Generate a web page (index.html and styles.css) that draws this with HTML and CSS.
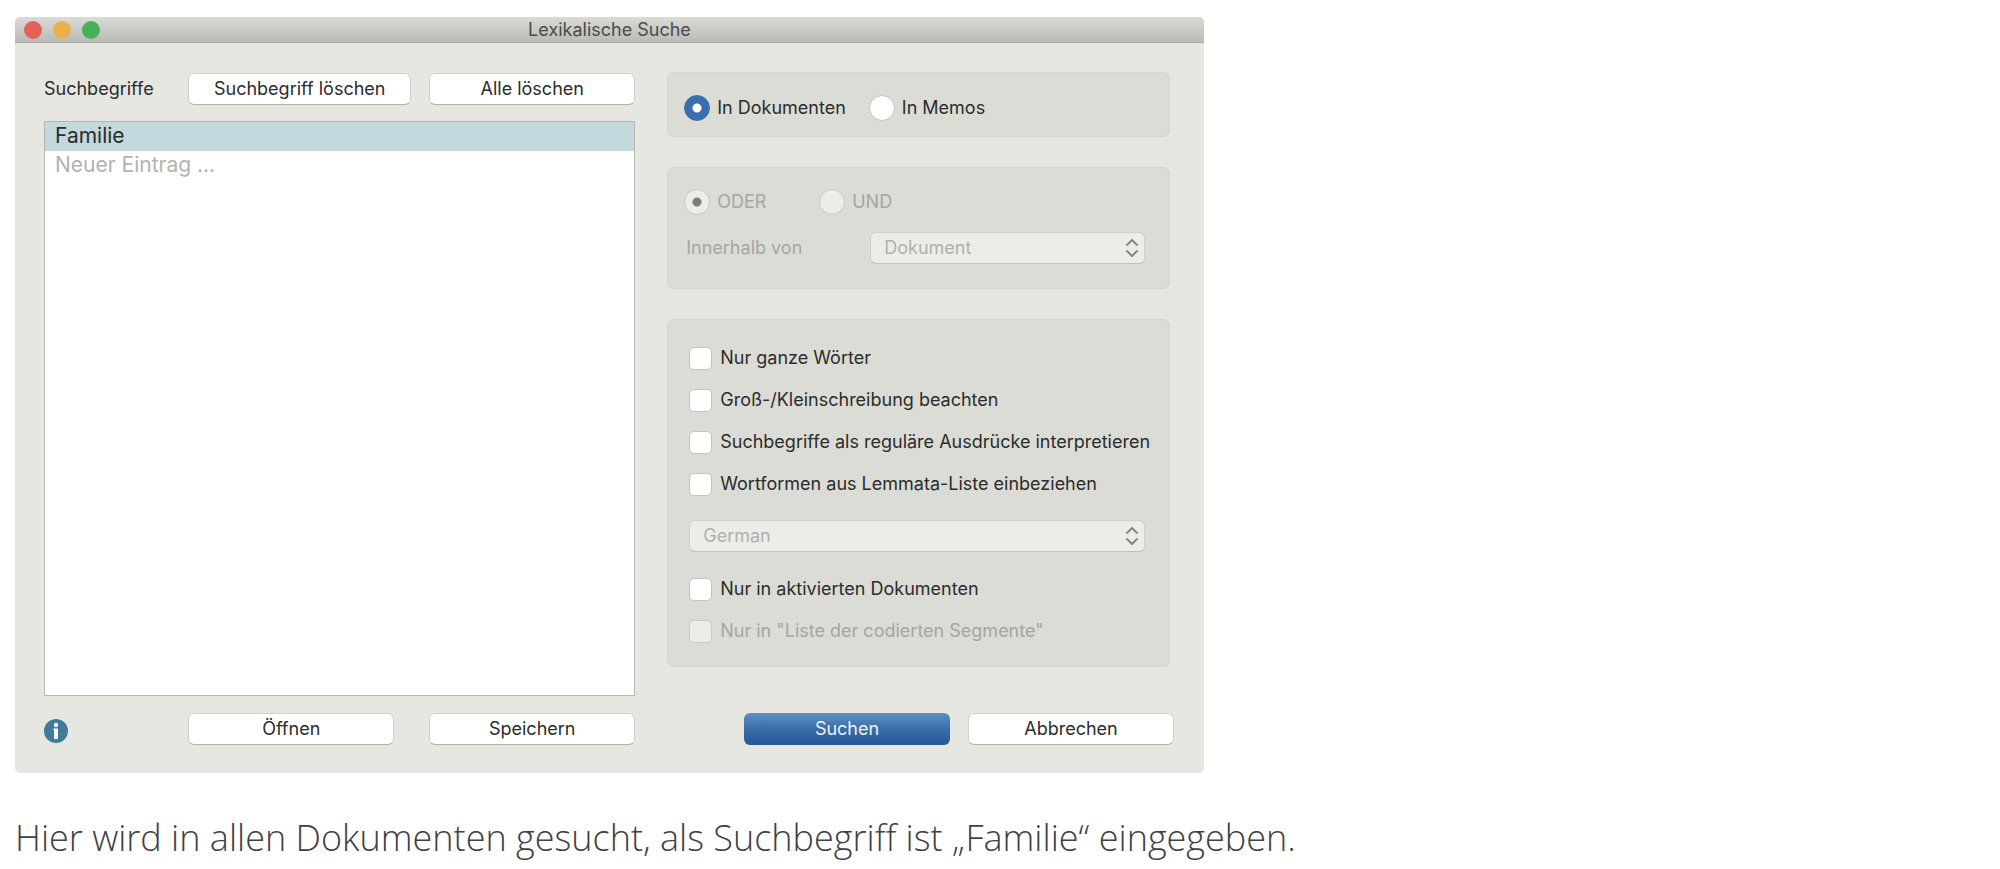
FILE: index.html
```
<!DOCTYPE html>
<html lang="de">
<head>
    <meta charset="UTF-8">
    <title>Lexikalische Suche</title>
    <link rel="stylesheet" href="styles.css">
</head>
<body>
    <form class="window">
        <div class="titlebar">
            <div class="lights">
                <span class="light red"></span>
                <span class="light yellow"></span>
                <span class="light green"></span>
            </div>
            <h1>Lexikalische Suche</h1>
        </div>

        <div class="content">
            <div class="terms">
                <div class="toolbar">
                    <span class="toolbar-label">Suchbegriffe</span>
                    <button type="button" class="wide">Suchbegriff löschen</button>
                    <button type="button">Alle löschen</button>
                </div>
                <ul class="term-list">
                    <li class="selected">Familie</li>
                    <li><input type="text" class="new-term" aria-label="Neuer Eintrag" placeholder="Neuer Eintrag ..."></li>
                </ul>
            </div>

            <div class="options">
                <div class="panel scope">
                    <label class="radio"><input type="radio" name="scope" checked>In Dokumenten</label>
                    <label class="radio"><input type="radio" name="scope">In Memos</label>
                </div>

                <div class="panel logic">
                    <div class="logic-row">
                        <label class="radio disabled"><input type="radio" name="logic" checked disabled>ODER</label>
                        <label class="radio disabled"><input type="radio" name="logic" disabled>UND</label>
                    </div>
                    <div class="within">
                        <label class="disabled" for="within">Innerhalb von</label>
                        <div class="select">
                            <select id="within" disabled>
                                <option>Dokument</option>
                            </select>
                            <svg class="arrows" viewBox="0 0 14 20"><path d="M2 7l5-5 5 5M2 13l5 5 5-5"/></svg>
                        </div>
                    </div>
                </div>

                <div class="panel flags">
                    <label class="check"><input type="checkbox">Nur ganze Wörter</label>
                    <label class="check"><input type="checkbox">Groß-/Kleinschreibung beachten</label>
                    <label class="check"><input type="checkbox">Suchbegriffe als reguläre Ausdrücke interpretieren</label>
                    <label class="check"><input type="checkbox">Wortformen aus Lemmata-Liste einbeziehen</label>
                    <div class="select language">
                        <select aria-label="Sprache" disabled>
                            <option>German</option>
                        </select>
                        <svg class="arrows" viewBox="0 0 14 20"><path d="M2 7l5-5 5 5M2 13l5 5 5-5"/></svg>
                    </div>
                    <label class="check"><input type="checkbox">Nur in aktivierten Dokumenten</label>
                    <label class="check disabled"><input type="checkbox" disabled>Nur in "Liste der codierten Segmente"</label>
                </div>
            </div>

            <div class="actions">
                <button type="button" class="info" aria-label="Hilfe">
                    <svg viewBox="0 0 24 24">
                        <circle cx="12" cy="12" r="12" fill="#407b9b"/>
                        <circle cx="12" cy="6" r="2.200" fill="#fff"/>
                        <path d="M9.500 9.500h4.500v10.500h-4v-9h-.5z" fill="#fff"/>
                    </svg>
                </button>
                <button type="button">Öffnen</button>
                <button type="button">Speichern</button>
            </div>
            <div class="actions confirm">
                <button type="submit" class="primary">Suchen</button>
                <button type="button">Abbrechen</button>
            </div>
        </div>
    </form>

    <p class="caption">Hier wird in allen Dokumenten gesucht, als Suchbegriff ist „Familie“ eingegeben.</p>
</body>
</html>
```

FILE: styles.css
```
* {
    box-sizing: border-box;
}
body {
    margin: 0;
    padding: 17px 15px;
    background-color: #fff;
    color: #2b2c2b;
    font-family: Inter, "Liberation Sans", sans-serif;
    font-size: 18px;
    line-height: 24px;
}
.window {
    max-width: 1189px;
    border-radius: 5px;
    background-color: #e6e7e1;
    overflow: hidden;
}
.titlebar {
    display: grid;
    grid-template-columns: 1fr auto 1fr;
    align-items: center;
    height: 26px;
    padding: 0 9px;
    border-bottom: 1px solid #a9aaa7;
    background: linear-gradient(#dadbd5, #babbb7);
}
.titlebar h1 {
    margin: 0;
    color: #4a4b4a;
    font-size: 18px;
    font-weight: 400;
}
.lights {
    display: flex;
    gap: 11px;
}
.light {
    width: 18px;
    height: 18px;
    border-radius: 50%;
}
.red {
    background-color: #e26259;
}
.yellow {
    background-color: #eab14b;
}
.green {
    background-color: #48b058;
}

.content {
    display: grid;
    grid-template-columns: 7fr 6fr;
    gap: 17px 32px;
    padding: 29px 30px 28px 29px;
}
.terms {
    display: flex;
    flex-direction: column;
    gap: 16px;
}
.toolbar {
    display: flex;
    align-items: center;
    gap: 18px;
    height: 33px;
}
.toolbar-label {
    flex: 1;
}

button {
    width: 206px;
    height: 32px;
    padding: 0;
    border: 1px solid #d0d1cc;
    border-bottom-color: #b0b1ad;
    border-radius: 6px;
    background-color: #fff;
    color: #2b2c2b;
    font: inherit;
}
button.wide {
    width: 223px;
}
button.primary {
    border: none;
    background: linear-gradient(#5d91c3, #3a6dab 50%, #255799);
    color: #eef3f8;
}
button.info {
    width: 24px;
    height: 24px;
    margin: 4px auto 0 0;
    border: none;
    background: none;
}
.info svg {
    display: block;
}

.term-list {
    flex: 1;
    margin: 0;
    padding: 0;
    border: 1px solid #b5b7b3;
    background-color: #fff;
    list-style: none;
    font-size: 21px;
}
.term-list li {
    height: 29px;
    padding: 0 10px;
    line-height: 28px;
}
.term-list .selected {
    background-color: #c3d9de;
}
.new-term {
    width: 100%;
    height: 28px;
    padding: 0;
    border: none;
    outline: none;
    background: none;
    font: inherit;
}
.new-term::placeholder {
    color: #b2b3af;
}

.options {
    display: flex;
    flex-direction: column;
    gap: 30px;
    min-width: 0;
    padding: 0 4px 29px 0;
}
.panel {
    border: 1px solid #d4d5cf;
    border-radius: 6px;
    background-color: #dbdcd6;
}
.scope {
    display: flex;
    align-items: center;
    gap: 23px;
    padding: 22px 16px 15px;
}
.logic {
    padding: 21px 24px 24px 16px;
}
.logic-row {
    display: grid;
    grid-template-columns: 135px 1fr;
    margin-bottom: 17px;
}
.within {
    display: grid;
    grid-template-columns: 184px 1fr;
    align-items: center;
    padding-left: 2px;
}
.flags {
    display: flex;
    flex-direction: column;
    gap: 18px;
    padding: 26px 24px 23px 21px;
}
.disabled {
    color: #a5a6a2;
}

.radio,
.check {
    display: flex;
    align-items: center;
    white-space: nowrap;
}
.radio {
    gap: 7px;
}
.check {
    gap: 8px;
}
input[type="radio"],
input[type="checkbox"] {
    flex: none;
    appearance: none;
    margin: 0;
    border: 1px solid #c3c4bf;
    background-color: #fff;
}
input[type="radio"] {
    width: 26px;
    height: 26px;
    border-radius: 50%;
}
input[type="radio"]:checked {
    border-color: #3a6dab;
    background: radial-gradient(circle, #fff 4px, #3a6dab 5px);
}
input[type="checkbox"] {
    width: 23px;
    height: 23px;
    border-radius: 5px;
}
input[type="radio"]:disabled,
input[type="checkbox"]:disabled {
    border-color: #c8c9c4;
    background-color: #ecede8;
}
input[type="radio"]:checked:disabled {
    background: radial-gradient(circle, #7d7e7b 4px, #ecede8 5px);
}

.select {
    position: relative;
}
.language {
    margin: 6px 0 7px;
}
select {
    display: block;
    width: 100%;
    height: 32px;
    padding: 0 13px;
    border: 1px solid #cfd0cb;
    border-bottom-color: #c0c1bc;
    border-radius: 6px;
    appearance: none;
    background-color: #ecede8;
    font: inherit;
}
select:disabled {
    color: #b0b1ad;
    opacity: 1;
}
.arrows {
    position: absolute;
    top: 6px;
    right: 6px;
    width: 14px;
    height: 20px;
    fill: none;
    stroke: #858682;
    stroke-width: 2;
    stroke-linecap: round;
    stroke-linejoin: round;
}

.actions {
    display: flex;
    align-items: center;
    gap: 35px;
}
.confirm {
    justify-content: flex-end;
    gap: 18px;
}

.caption {
    margin: 40px 0 0;
    color: #404142;
    font-family: "Open Sans", "Noto Sans", sans-serif;
    font-size: 36px;
    font-weight: 300;
    line-height: 50px;
}
```
